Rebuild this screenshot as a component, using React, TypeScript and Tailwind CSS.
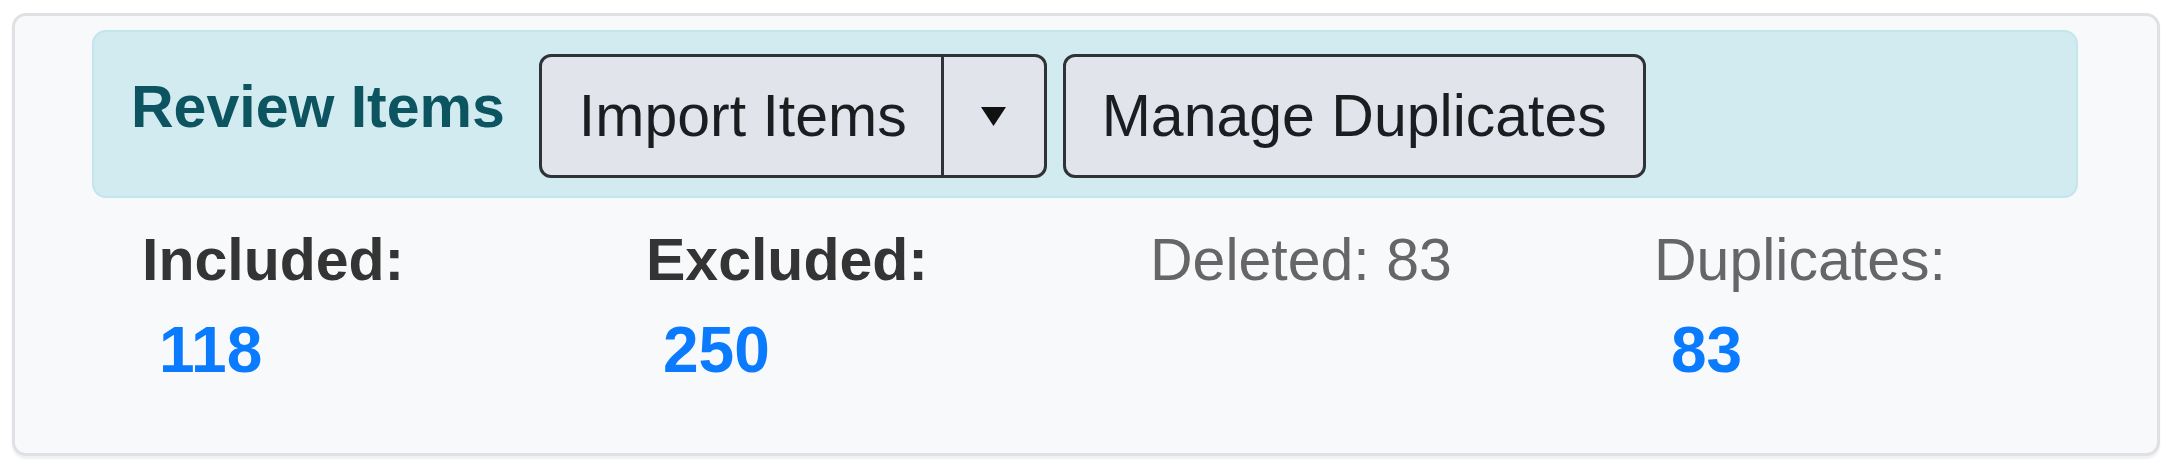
const stats = [
  { label: "Included:", value: "118", bold: true },
  { label: "Excluded:", value: "250", bold: true },
  { label: "Deleted: 83", value: null, bold: false },
  { label: "Duplicates:", value: "83", bold: false },
]

function Caret() {
  return (
    <svg width="27" height="21" viewBox="0 0 27 21" className="block">
      <path d="M1 1 L26 1 L13.5 20 Z" fill="#111" />
    </svg>
  )
}

export default function App() {
  return (
    <div
      className="min-h-screen bg-white pt-[13px] pl-[12px]"
      style={{ fontFamily: '"Liberation Sans", Arial, sans-serif' }}
    >
      <div className="flex h-[443px] w-[2148px] flex-col rounded-[14px] border-[3px] border-[#dfe1e4] bg-[#f8f9fa] pt-[14px] pl-[77px] pr-[79px] shadow-[0_3px_2px_rgba(0,0,0,0.06)]">
        {/* Header band */}
        <div className="flex h-[168px] items-start rounded-[14px] border-2 border-[#c3e6ec] bg-[#d1ebf0] pt-[22px] pl-[37px]">
          <h2 className="mt-[19px] text-[59px] leading-[68px] font-bold text-[#0c5460]">Review Items</h2>

          <div className="ml-[34px] flex h-[124px] overflow-hidden rounded-[12px] border-[3px] border-[#2f3337] bg-[#e2e4ec]">
            <button className="flex items-center pl-[37px] pr-[34px] text-[59px] leading-[68px] text-[#1b1e21]">
              Import Items
            </button>
            <div className="flex w-[103px] items-center justify-center border-l-[3px] border-[#2f3337]">
              <Caret />
            </div>
          </div>

          <button className="ml-[16px] flex h-[124px] items-center rounded-[12px] border-[3px] border-[#2f3337] bg-[#e2e4ec] px-[36px] text-[59px] leading-[68px] text-[#1b1e21]">
            Manage Duplicates
          </button>
        </div>

        {/* Counts */}
        <div className="mt-[28px] flex pl-[50px]">
          {stats.map((s) => (
            <div key={s.label} className="w-[504px] shrink-0">
              <div
                className={
                  s.bold
                    ? "text-[59px] leading-[68px] font-bold text-[#343434]"
                    : "text-[59px] leading-[68px] text-[#666666]"
                }
              >
                {s.label}
              </div>
              {s.value && (
                <div className="mt-[20px] ml-[17px] text-[64px] leading-[72px] font-bold text-[#0a7bff]">
                  {s.value}
                </div>
              )}
            </div>
          ))}
        </div>
      </div>
    </div>
  )
}
